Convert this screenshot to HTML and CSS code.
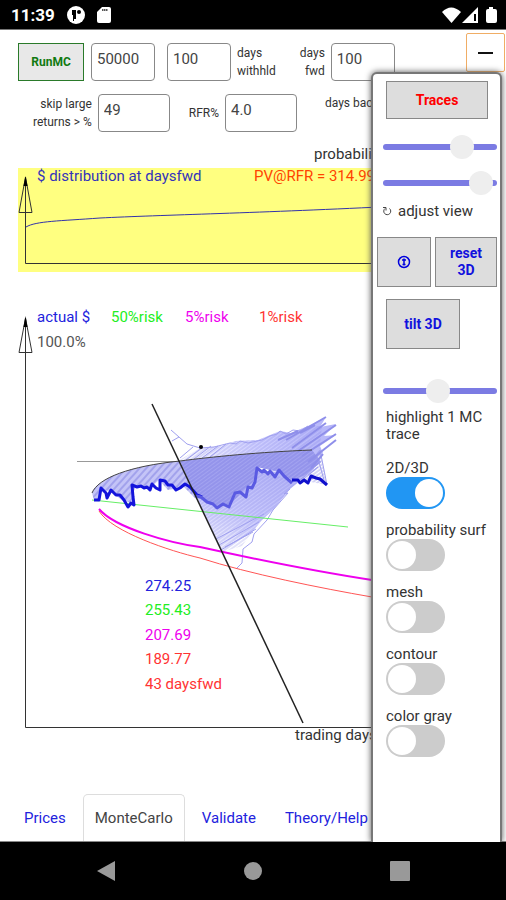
FILE: index.html
```html
<!DOCTYPE html>
<html lang="en">
<head>
    <meta charset="UTF-8">
    <meta name="viewport" content="width=device-width, initial-scale=1.0">
    <title>MonteCarlo</title>
    <link rel="stylesheet" href="styles.css">
</head>
<body>
    <header class="status-bar">
        <span class="clock">11:39</span>
        <svg class="status-icon" width="18" height="18" viewBox="0 0 18 18">
            <circle cx="9" cy="9" r="9" fill="#fff"/>
            <path d="M5 4h4v9H7v2H6V9H5z" fill="#000"/>
            <circle cx="12" cy="6" r="2" fill="#000"/>
        </svg>
        <svg class="status-icon" width="14" height="16" viewBox="0 0 14 16">
            <path d="M5 0h7q2 0 2 2v12q0 2-2 2H2q-2 0-2-2V5z" fill="#fff"/>
            <path d="M5 3h6" stroke="#555" stroke-width="2" stroke-dasharray="1.5 .5"/>
        </svg>
        <svg class="signals" width="56" height="18" viewBox="0 0 56 18">
            <path d="M0 6Q9-3 19 6L9.500 17z" fill="#fff"/>
            <path d="M36 1v16H20z" fill="#fff"/>
            <path d="M33 8v7" stroke="#000" stroke-width="2"/>
            <path d="M47 1h4v2h2q2 0 2 2v10q0 2-2 2h-7q-2 0-2-2V5q0-2 2-2h1z" fill="#fff"/>
        </svg>
    </header>

    <main class="app">
        <form class="settings">
            <div class="settings-row">
                <button type="button" class="run-btn">RunMC</button>
                <input class="field" type="text" value="50000" aria-label="traces">
                <div class="field-group">
                    <input class="field" id="withheld" type="text" value="100">
                    <label for="withheld">days<br>withhld</label>
                </div>
                <div class="field-group fwd">
                    <label class="right" for="fwd">days<br>fwd</label>
                    <input class="field" id="fwd" type="text" value="100">
                </div>
            </div>
            <div class="settings-row second">
                <div class="field-group skip">
                    <label class="right" for="skip">skip large<br>returns &gt; %</label>
                    <input class="field wide" id="skip" type="text" value="49">
                </div>
                <div class="field-group">
                    <label for="rfr">RFR%</label>
                    <input class="field wide" id="rfr" type="text" value="4.0">
                </div>
                <span class="back-label">days back</span>
            </div>
        </form>
        <button type="button" class="collapse-btn" aria-label="collapse"></button>

        <!-- distribution chart -->
        <svg class="chart" viewBox="0 140 506 140">
            <text x="314" y="159" fill="#333">probability</text>
            <rect x="18" y="168" width="470" height="104" fill="#ffff80"/>
            <g fill="none" stroke="#333">
                <path d="M25.500 178V263.500H488"/>
                <path d="M25.500 177L19 212.500H32z"/>
            </g>
            <path d="M25.500 176l-2 10h4z"/>
            <path d="M26 227C36 221 60 221 100 218C160 215 260 213 400 206" fill="none" stroke="#33a"/>
            <text x="37" y="181" fill="#33b">$ distribution at daysfwd</text>
            <text x="254" y="181" fill="#f40">PV@RFR = 314.99</text>
        </svg>

        <!-- 3D price chart -->
        <svg class="chart" viewBox="0 280 506 480">
            <defs>
                <pattern id="hatch" width="5" height="5" patternUnits="userSpaceOnUse" patternTransform="rotate(-48)">
                    <path d="M0 2h5" stroke="#7070dc" stroke-width="1"/>
                </pattern>
                <pattern id="fine" width="3" height="3" patternUnits="userSpaceOnUse" patternTransform="rotate(-36)">
                    <path d="M0 1h3" stroke="#7070e0" stroke-width="1"/>
                </pattern>
                <linearGradient id="top" x1="0" y1="0" x2="1" y2="0">
                    <stop offset="0" stop-color="#fff"/>
                    <stop offset=".5" stop-color="#d0d0ff"/>
                    <stop offset="1" stop-color="#b4b4f8"/>
                </linearGradient>
                <linearGradient id="low" x1="0" y1="1" x2=".5" y2="0">
                    <stop offset="0" stop-color="#fff"/>
                    <stop offset=".5" stop-color="#ccccfd"/>
                    <stop offset="1" stop-color="#b8b8f8"/>
                </linearGradient>
            </defs>
            <g fill="none" stroke="#333">
                <path d="M25.500 318V727.500H400"/>
                <path d="M25.500 318L19 352.500H32z"/>
            </g>
            <path d="M25.500 316l-2 11h4z"/>
            <text x="37" y="322" fill="#22d">actual $</text>
            <text x="111" y="322" fill="#2e2">50%risk</text>
            <text x="185" y="322" fill="#e0e">5%risk</text>
            <text x="259" y="322" fill="#f33">1%risk</text>
            <text x="37" y="347" fill="#555">100.0%</text>

            <path d="M77 461.500H180" stroke="#999"/>

            <!-- above the median curve -->
            <path d="M178 461L200 448L222 446L235 441L258 440L280 431L291 433L308 426L326 417L320 427L336 424L324 436L336 435L320 446L323 453L312 460L200 460z" fill="url(#top)"/>
            <path d="M178 461L200 448L222 446L235 441L258 440L280 431L291 433L308 426L322 426L320 446L312 450L200 460z" fill="url(#fine)" opacity=".4"/>
            <!-- below the actual trace -->
            <path d="M196 496L218 507L230 505L242 490L257 470L279 472L292 480L312 461L314 469L290 489L273 510L262 520L253 531L222 552z" fill="url(#low)"/>
            <path d="M196 496L218 507L230 505L257 470L292 480L308 475L290 489L273 510L262 520L253 531L242 546L222 552z" fill="url(#fine)" opacity=".4"/>
            <path d="M320 448L327 485L300 480z" fill="url(#fine)" opacity=".6"/>
            <!-- between the median curve and the actual trace -->
            <path d="M92 493C98 478 130 466 180 461L196 499L184 487L168 490L159 480L150 488L135 487L131 503L122 500L110 491L101 490L98 500L94 500z" fill="#c4c4f7"/>
            <path d="M92 493C98 478 130 466 180 461L196 499L184 487L168 490L159 480L150 488L135 487L131 503L122 500L110 491L101 490L98 500L94 500z" fill="url(#hatch)" opacity=".8"/>
            <path d="M180 461Q250 452 312 450L321 462L306 475L292 480L279 472L257 467L253 482L242 492L230 505L218 507L196 497z" fill="#a3a3f0"/>
            <path d="M180 461Q250 452 312 450L321 462L306 475L292 480L279 472L257 467L253 482L242 492L230 505L218 507L196 497z" fill="url(#fine)" opacity=".6"/>

            <!-- ragged edge of the surface -->
            <g fill="none" stroke="#a0a0ef" stroke-width="1">
                <path d="M171 430L179 437L172 441M179 437L187 444L200 448L214 447L222 445L230 443L236 444L240 441L248 443L262 440L270 436L277 434L280 431L286 434L293 430L300 431L308 426"/>
                <path d="M180 458l13-11M186 460l17-13M194 459l17-13M202 458l16-12M210 457l16-13"/>
                <path d="M317 455l7 25M320 450l7 35M308 475l10-8M304 479l14-12M290 489l-6 5 4-1-15 17-6 10-13 14-2 8-9 7-1 14-6 6"/>
                <path d="M216 539l48-25M219 545l40-23M221 550l35-21M225 547l28-15"/>
                <path d="M278 440l20-9M286 440l40-23M292 448l34-25M298 451l38-26M302 456l34-22M308 462l28-22M311 468l12-14M300 433l15-8" stroke-width="2" stroke="#8f8fea"/>
            </g>

            <path d="M92 493C98 478 130 466 180 461C210 457 260 452 312 450" fill="none" stroke="#444"/>
            <path d="M92 500L348 527" stroke="#6e6" stroke-width="1"/>
            <path d="M99 509C115 528 170 543 200 547C250 558 320 572 372 580" fill="none" stroke="#e0e" stroke-width="2"/>
            <path d="M99 511C112 532 170 551 200 558C250 574 320 588 372 597" fill="none" stroke="#f55" stroke-width="1"/>
            <path d="M94 500h5l2-12 5 5 1 5 4-8 5 5 4 0 4 5 4 7 3-4 3 2-1-8-1-12 5 2 4-1 3 2 3-1 3 3 2-6 4 4 4 2 0-10 5 1 3 4 4 0 4 5 4-2 5-4 5 3 7 8 5 2" fill="none" stroke="#1414dc" stroke-width="3" stroke-linejoin="round"/>
            <path d="M196 496l5 1 6 5 6 2 4 4 6-4 6 3 6-14 5-1 6 5 2-10 4 1 3-6 2-14 5 4 2-2 4 4 2-3 5 6 4-7 5 6 8 7" fill="none" stroke="#5a5ae2" stroke-width="3" stroke-linejoin="round"/>
            <path d="M292 480l6 0 2 3 4-3 4 3 3-7 5 2 4 1 7 6" fill="none" stroke="#1010cc" stroke-width="3" stroke-linejoin="round"/>
            <path d="M152 404L303 723" stroke="#222" stroke-width="1.500"/>
            <circle cx="201" cy="447" r="2"/>

            <text x="145" y="591" fill="#22d">274.25</text>
            <text x="145" y="615" fill="#2e2">255.43</text>
            <text x="145" y="640" fill="#e0e">207.69</text>
            <text x="145" y="664" fill="#f33">189.77</text>
            <text x="145" y="689" fill="#f33">43 daysfwd</text>
            <text x="295" y="740" fill="#333">trading days</text>
        </svg>

        <nav class="tabs">
            <a class="tab" href="#prices">Prices</a>
            <a class="tab active" href="#montecarlo">MonteCarlo</a>
            <a class="tab" href="#validate">Validate</a>
            <a class="tab" href="#theory">Theory/Help</a>
        </nav>

        <aside class="panel">
            <button type="button" class="panel-btn traces-btn">Traces</button>
            <input class="slider" type="range" min="0" max="100" value="74" aria-label="rotate">
            <input class="slider tilt-slider" type="range" min="0" max="100" value="96" aria-label="elevate">
            <div class="adjust">
                <svg width="9" height="10" viewBox="0 0 9 10" fill="none" stroke="#444">
                    <path d="M6.500 2.500A3.500 3.500 0 1 1 2 2.500M0 1.500h3v3"/>
                </svg>
                <span>adjust view</span>
            </div>
            <div class="btn-row">
                <button type="button" class="panel-btn spin-btn" aria-label="flip">
                    <svg width="14" height="14" viewBox="0 0 14 14" fill="none" stroke="#00d" stroke-width="1.500">
                        <circle cx="7" cy="7" r="5.500"/>
                        <path d="M7 3.500v7M5 5h4M5.500 9.500h3"/>
                    </svg>
                </button>
                <button type="button" class="panel-btn reset-btn">reset 3D</button>
            </div>
            <button type="button" class="panel-btn tilt-btn">tilt 3D</button>
            <input class="slider trace-slider" id="trace" type="range" min="0" max="100" value="48">
            <label class="trace-label" for="trace">highlight 1 MC trace</label>

            <label class="switch">2D/3D<input type="checkbox" checked></label>
            <label class="switch">probability surf<input type="checkbox"></label>
            <label class="switch">mesh<input type="checkbox"></label>
            <label class="switch">contour<input type="checkbox"></label>
            <label class="switch">color gray<input type="checkbox"></label>
        </aside>
    </main>

    <footer class="nav-bar">
        <svg width="20" height="22" viewBox="0 0 20 22"><path d="M19 1v20L1 11z" fill="#999"/></svg>
        <svg width="20" height="22" viewBox="0 0 20 22"><circle cx="10" cy="11" r="9" fill="#999"/></svg>
        <svg width="20" height="22" viewBox="0 0 20 22"><rect y="1" width="20" height="20" rx="1" fill="#999"/></svg>
    </footer>
</body>
</html>
```

FILE: styles.css
```css
* {
    box-sizing: border-box;
}

body {
    font-family: Roboto, sans-serif;
    font-size: 15px;
    margin: 0;
    min-height: 100vh;
    display: flex;
    flex-direction: column;
    color: #333;
    background: #fff;
}

button,
input {
    font-family: inherit;
    margin: 0;
}

/* phone bars */
.status-bar {
    height: 30px;
    padding: 0 8px 0 11px;
    display: flex;
    align-items: center;
    background: #000;
    color: #fff;
    border-bottom: 1px solid #777;
}

.clock {
    font-size: 17px;
    font-weight: 700;
    margin-right: 12px;
}

.status-icon {
    margin-right: 12px;
}

.signals {
    margin-left: auto;
}

.nav-bar {
    height: 58px;
    padding: 0 96px;
    display: flex;
    align-items: center;
    justify-content: space-between;
    background: #000;
}

.app {
    position: relative;
    flex: 1;
    display: flex;
    flex-direction: column;
    overflow: hidden;
}

/* settings */
.settings {
    padding: 13px 18px 8px;
    font-size: 12px;
    line-height: 18px;
}

.settings-row {
    display: flex;
    align-items: center;
}

.second {
    margin-top: 13px;
}

.run-btn {
    width: 66px;
    height: 38px;
    margin-right: 7px;
    padding: 0;
    border: 1px solid #2a7a2a;
    background: #e8e8e8;
    color: #117a11;
    font-size: 12px;
    font-weight: 700;
}

.field {
    width: 64px;
    height: 38px;
    padding: 0 5px 6px;
    border: 1px solid #888;
    border-radius: 4px;
    background: #fff;
    color: #444;
    font-size: 15px;
}

.wide {
    width: 72px;
}

.field-group {
    display: flex;
    align-items: center;
    gap: 6px;
    margin-left: 12px;
}

.fwd {
    margin-left: 24px;
}

.skip {
    margin-left: 15px;
    margin-right: 7px;
}

.right {
    text-align: right;
}

.back-label {
    align-self: flex-start;
    margin-left: 28px;
}

.collapse-btn {
    position: absolute;
    top: 3px;
    right: 1px;
    width: 39px;
    height: 39px;
    padding: 0 11px;
    border: 1px solid #f0ad65;
    border-radius: 2px;
    background: #fff;
}

.collapse-btn::before {
    content: "";
    display: block;
    height: 2px;
    background: #111;
}

/* charts */
.chart {
    display: block;
    width: 100%;
}

/* tabs */
.tabs {
    display: flex;
    gap: 5px;
    margin-top: auto;
    padding-left: 12px;
    border-bottom: 1px solid #888;
}

.tab {
    padding: 0 11px;
    border: 1px solid transparent;
    border-bottom: 0;
    line-height: 46px;
    color: #22d;
    text-decoration: none;
}

.active {
    border-color: #ddd;
    border-radius: 5px 5px 0 0;
    color: #444;
}

/* side panel */
.panel {
    position: absolute;
    top: 42px;
    right: 4px;
    bottom: 0;
    width: 131px;
    padding: 7px 5px 0 4px;
    border: 2px solid #777;
    border-bottom: 0;
    border-radius: 6px 6px 0 0;
    background: #fff;
    box-shadow: 0 0 6px #555;
    display: flex;
    flex-direction: column;
    align-items: flex-start;
}

.panel-btn {
    border: 1px solid #888;
    background: #ddd;
    color: #11d;
    padding: 0;
    font-size: 14px;
    font-weight: 700;
    line-height: 17px;
}

.traces-btn {
    width: 102px;
    height: 38px;
    margin: 0 0 16px 9px;
    color: #f00;
}

.slider {
    appearance: none;
    width: 114px;
    height: 24px;
    margin: 0 0 12px 6px;
    background: none;
}

.slider::-webkit-slider-runnable-track {
    height: 6px;
    border-radius: 3px;
    background: #7b7be3;
}

.slider::-webkit-slider-thumb {
    appearance: none;
    width: 24px;
    height: 24px;
    margin-top: -9px;
    border-radius: 50%;
    background: #eee;
}

.tilt-slider {
    margin-bottom: 6px;
}

.adjust {
    display: flex;
    align-items: center;
    gap: 6px;
    margin: 0 0 16px 6px;
    line-height: 20px;
    white-space: nowrap;
}

.btn-row {
    display: flex;
    gap: 4px;
    margin-bottom: 12px;
}

.spin-btn {
    width: 54px;
    height: 50px;
}

.reset-btn {
    width: 62px;
    height: 50px;
    padding: 0 10px;
}

.spin-btn svg {
    display: block;
    margin: 0 auto;
}

.tilt-btn {
    width: 74px;
    height: 50px;
    margin: 0 0 30px 9px;
}

.trace-slider {
    margin-bottom: 6px;
}

.trace-label {
    margin: 0 8px 16px 9px;
    line-height: 17px;
}

.switch {
    display: flex;
    flex-direction: column;
    margin: 0 0 12px 9px;
    line-height: 18px;
    white-space: nowrap;
}

.switch input {
    appearance: none;
    width: 59px;
    height: 32px;
    padding: 2px;
    border-radius: 16px;
    background: #ccc;
}

.switch input::before {
    content: "";
    display: block;
    width: 28px;
    height: 28px;
    border-radius: 50%;
    background: #fff;
}

.switch input:checked {
    background: #2196f3;
}

.switch input:checked::before {
    margin-left: auto;
}
```
